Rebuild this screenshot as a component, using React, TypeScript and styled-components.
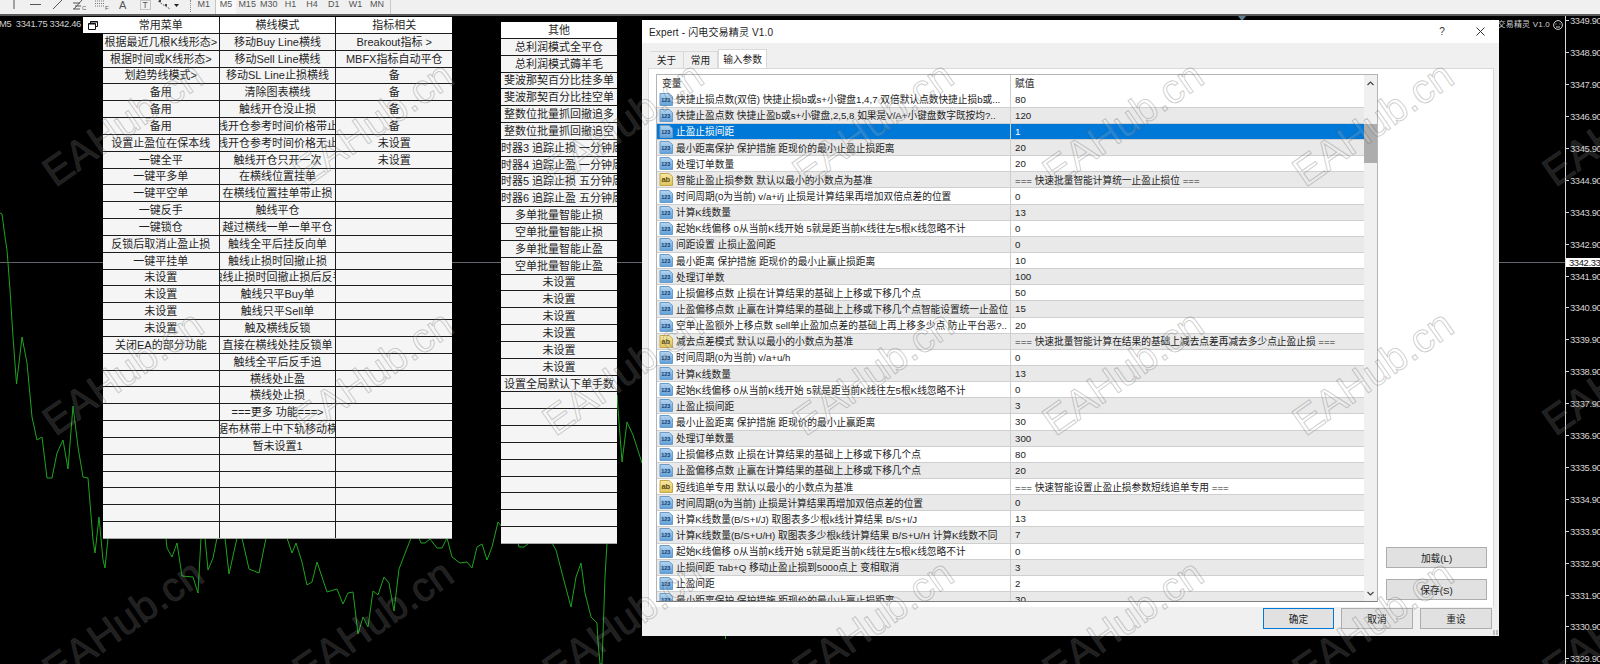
import React from "react";
import styled, { createGlobalStyle } from "styled-components";

const CJK = `"Liberation Sans", "Noto Sans CJK SC", sans-serif`;

const Global = createGlobalStyle`
  html, body { margin: 0; padding: 0; background: #000; }
  body { width: 1600px; height: 664px; overflow: hidden; font-family: ${CJK}; }
  * { box-sizing: border-box; }
`;

const Page = styled.div`
  position: relative;
  width: 1600px;
  height: 664px;
  overflow: hidden;
  display: flex;
  flex-direction: column;
  background: #000;
`;

/* ---------- toolbar ---------- */
const Toolbar = styled.div`
  height: 16px;
  flex: none;
  display: flex;
  align-items: flex-start;
  padding-left: 3px;
  background: #f0f0f0;
  border-bottom: 2px solid #5a5a5a;
  overflow: hidden;
`;
const Tool = styled.div`
  width: 22px;
  height: 11px;
  display: flex;
  justify-content: center;
  svg { display: block; }
`;
const Grip = styled.div`
  width: 1px;
  height: 12px;
  margin-left: 11px;
  margin-right: 2px;
  border-left: 1px dotted #8a8a8a;
`;
const Frame = styled.div<{ $on?: boolean }>`
  width: 21.67px;
  height: 14px;
  text-align: center;
  font-size: 9px;
  line-height: 9px;
  color: #555;
  background: ${(p) => (p.$on ? "#f9f9f9" : "transparent")};
  border-left: ${(p) => (p.$on ? "1px solid #c4c4c4" : "0")};
`;
const EndRule = styled.div`
  width: 1px;
  height: 14px;
  margin-left: 2px;
  background: #c9c9c9;
`;

/* ---------- chart ---------- */
const ChartArea = styled.div`
  flex: 1;
  min-height: 0;
  display: flex;
`;
const Plot = styled.div`
  position: relative;
  flex: 1;
  overflow: hidden;
  background: #000;
`;
const PlotLines = styled.svg`
  position: absolute;
  left: 0;
  top: 0;
  width: 1565px;
  height: 648px;
`;
const Axis = styled.div`
  position: relative;
  width: 35px;
  flex: none;
  border-left: 1px solid #d8d8d8;
  display: flex;
  flex-direction: column;
  background: #000;
`;
const AxisList = styled.div`
  margin-top: -11.2px;
  display: flex;
  flex-direction: column;
`;
const AxisLabel = styled.div`
  height: 31.92px;
  display: flex;
  align-items: center;
  color: #d4d4d4;
  font-size: 9.4px;
  letter-spacing: -0.35px;
  white-space: nowrap;
  &::before {
    content: "";
    width: 3px;
    height: 1px;
    margin-right: 1px;
    background: #d8d8d8;
    flex: none;
  }
`;
const PriceTag = styled.div`
  position: absolute;
  left: 0;
  top: 242px;
  width: 34px;
  height: 9px;
  background: #fff;
  color: #111;
  font-size: 9.4px;
  line-height: 9px;
  letter-spacing: -0.35px;
  padding-left: 3px;
`;
const Quote = styled.div`
  position: absolute;
  left: -1px;
  top: 2px;
  width: 84px;
  overflow: hidden;
  white-space: pre;
  color: #cfcfcf;
  font-size: 9.4px;
  line-height: 11px;
  letter-spacing: -0.35px;
`;
const Restore = styled.div`
  position: absolute;
  left: 83px;
  top: 1px;
  width: 20px;
  height: 16px;
  background: #fff;
  display: flex;
  align-items: center;
  justify-content: center;
`;
const EaName = styled.div`
  position: absolute;
  right: 0;
  top: 3px;
  display: flex;
  align-items: center;
  gap: 3px;
  padding-right: 2px;
  color: #d4d4d4;
  font-size: 8px;
  letter-spacing: 0.2px;
  line-height: 11px;
  white-space: nowrap;
`;
const Shift = styled.div`
  position: absolute;
  left: 1238px;
  top: 0;
  width: 0;
  height: 0;
  border-left: 4px solid transparent;
  border-right: 4px solid transparent;
  border-top: 5px solid #5f7b90;
`;

/* ---------- floating button tables ---------- */
const Panel = styled.div<{ $x: number; $y: number; $w: number; $h: number; $cols: number }>`
  position: absolute;
  left: ${(p) => p.$x}px;
  top: ${(p) => p.$y}px;
  width: ${(p) => p.$w}px;
  height: ${(p) => p.$h}px;
  display: grid;
  grid-auto-flow: column;
  grid-template-rows: repeat(31, 1fr);
  grid-template-columns: repeat(${(p) => p.$cols}, 1fr);
  gap: 1px;
  background: #1c1c1c;
  border-bottom: 1px solid #a8a8a8;
`;
const Cell = styled.div<{ $head?: boolean; $nudge?: boolean }>`
  min-width: 0;
  overflow: hidden;
  display: flex;
  align-items: center;
  justify-content: center;
  white-space: nowrap;
  padding-left: ${(p) => (p.$nudge ? 6 : 0)}px;
  background: ${(p) => (p.$head ? "#fff" : "#f5f5f5")};
  color: #1f1f1f;
  font-size: 11px;
  line-height: 14px;
`;

/* ---------- dialog ---------- */
const Dialog = styled.div`
  position: absolute;
  left: 642px;
  top: 4px;
  width: 857px;
  height: 616px;
  display: flex;
  flex-direction: column;
  background: #f0f0f0;
  font-size: 9.7px;
  color: #1c1c1c;
`;
const TitleBar = styled.div`
  height: 23px;
  flex: none;
  display: flex;
  align-items: center;
  background: #fff;
  padding-left: 7px;
  font-size: 10px;
  letter-spacing: 0.15px;
`;
const TitleText = styled.div`
  flex: 1;
`;
const TitleButton = styled.div`
  width: 38px;
  display: flex;
  justify-content: center;
  color: #333;
`;
const TabStrip = styled.div`
  height: 25px;
  flex: none;
  display: flex;
  align-items: flex-end;
  padding-left: 8px;
`;
const Tab = styled.div<{ $on?: boolean }>`
  height: ${(p) => (p.$on ? 19 : 17)}px;
  width: ${(p) => (p.$on ? 49 : 34)}px;
  display: flex;
  align-items: center;
  justify-content: center;
  background: ${(p) => (p.$on ? "#fff" : "#f0f0f0")};
  border: 1px solid #d9d9d9;
  border-bottom: 0;
  border-left-width: ${(p) => (p.$on ? 1 : 0)}px;
`;
const TabBody = styled.div`
  flex: 1;
  min-height: 0;
  display: flex;
  gap: 8px;
  margin: 0 5px 0 6px;
  padding: 5px 6px 5px 7px;
  background: #fff;
  border: 1px solid #d9d9d9;
  border-bottom: 0;
`;
const ParamGrid = styled.div`
  flex: 1;
  min-width: 0;
  display: flex;
  border: 1px solid #b4b4b4;
  border-bottom-color: #7f7f7f;
  background: #fff;
`;
const ParamList = styled.div`
  flex: 1;
  min-width: 0;
  overflow: hidden;
`;
const ParamRow = styled.div<{ $tone: "plain" | "alt" | "sel" | "head" }>`
  height: ${(p) => (p.$tone === "head" ? 16.6 : 16.15)}px;
  display: flex;
  align-items: center;
  white-space: nowrap;
  color: ${(p) => (p.$tone === "sel" ? "#fff" : "#222")};
  background: ${(p) =>
    p.$tone === "sel" ? "#0078d7" : p.$tone === "alt" ? "#e9e9e9" : "#fff"};
  border-bottom: ${(p) => (p.$tone === "head" ? "0" : "1px solid #cfcfcf")};
`;
const NameCol = styled.div`
  width: 353px;
  flex: none;
  display: flex;
  align-items: center;
  gap: 3px;
  padding-left: 2px;
  overflow: hidden;
`;
const HeadName = styled(NameCol)`
  padding-left: 5px;
`;
const ValueCol = styled.div`
  flex: 1;
  height: 100%;
  display: flex;
  align-items: center;
  padding-left: 4px;
  border-left: 1px solid #cfcfcf;
  overflow: hidden;
`;
const ScrollBar = styled.div`
  width: 13px;
  flex: none;
  display: flex;
  flex-direction: column;
  background: #f0f0f0;
`;
const ScrollEnd = styled.div`
  height: 16px;
  flex: none;
  display: flex;
  align-items: center;
  justify-content: center;
`;
const ScrollTrack = styled.div`
  flex: 1;
  padding-top: 33px;
`;
const ScrollThumb = styled.div`
  height: 39px;
  background: #adadad;
`;
const SideColumn = styled.div`
  width: 101px;
  flex: none;
  display: flex;
  flex-direction: column;
  justify-content: flex-end;
  gap: 11px;
  padding-bottom: 2px;
`;
const Button = styled.div<{ $primary?: boolean; $w?: number }>`
  height: 21px;
  width: ${(p) => (p.$w ? `${p.$w}px` : "100%")};
  display: flex;
  align-items: center;
  justify-content: center;
  background: #e1e1e1;
  border: ${(p) => (p.$primary ? "1.5px solid #0078d7" : "1px solid #adadad")};
`;
const Footer = styled.div`
  height: 29px;
  flex: none;
  display: flex;
  justify-content: flex-end;
  gap: 7px;
  padding: 1px 7px 0 0;
`;
const SizeGrip = styled.div`
  position: absolute;
  right: 1px;
  bottom: 1px;
  width: 5px;
  height: 5px;
  background: repeating-linear-gradient(90deg, #bdbdbd 0 2px, transparent 2px 3px);
`;

/* ---------- watermark ---------- */
const Mark = styled.div<{ $x: number; $y: number }>`
  position: absolute;
  left: ${(p) => p.$x}px;
  top: ${(p) => p.$y}px;
  transform: translate(-50%, -50%) rotate(-35deg);
  font-family: "Liberation Sans", sans-serif;
  font-size: 41px;
  line-height: 41px;
  white-space: nowrap;
  color: rgba(255, 255, 255, 0.12);
  -webkit-text-stroke: 1px rgba(85, 85, 85, 0.3);
  pointer-events: none;
`;

/* ---------- data ---------- */
const blank = (a: string[], n: number) => [...a, ...Array(Math.max(0, n - a.length)).fill("")];
const col1 = blank(["常用菜单","根据最近几根K线形态>","根据时间或K线形态>","划趋势线模式>","备用","备用","备用","设置止盈位在保本线","一键全平","一键平多单","一键平空单","一键反手","一键锁仓","反锁后取消止盈止损","一键平挂单","未设置","未设置","未设置","未设置","关闭EA的部分功能"], 31);
const col2 = blank(["横线模式","移动Buy Line横线","移动Sell Line横线","移动SL Line止损横线","清除图表横线","触线开仓没止损","触线开仓参考时间价格带止损","触线开仓参考时间价格无止损","触线开仓只开一次","在横线位置挂单","在横线位置挂单带止损","触线平仓","越过横线一单一单平仓","触线全平后挂反向单","触线止损时回撤止损","触线止损时回撤止损后反手","触线只平Buy单","触线只平Sell单","触及横线反锁","直接在横线处挂反锁单","触线全平后反手追","横线处止盈","横线处止损","===更多 功能===>","根据布林带上中下轨移动横线","暂未设置1"], 31);
const col3 = blank(["指标相关","Breakout指标 >","MBFX指标自动平仓","备","备","备","备","未设置","未设置"], 31);
const col4 = blank(["其他","总利润模式全平仓","总利润模式薅羊毛","斐波那契百分比挂多单","斐波那契百分比挂空单","整数位批量抓回撤追多","整数位批量抓回撤追空","定时器3 追踪止损 一分钟周期","定时器4 追踪止盈 一分钟周期","定时器5 追踪止损 五分钟周期","定时器6 追踪止盈 五分钟周期","多单批量智能止损","空单批量智能止损","多单批量智能止盈","空单批量智能止盈","未设置","未设置","未设置","未设置","未设置","未设置","设置全局默认下单手数"], 31);

type Param = [string, string, boolean?];
const params: Param[] = [
  ["快捷止损点数(双倍) 快捷止损b或s+小键盘1,4,7 双倍默认点数快捷止损b或...", "80"],
  ["快捷止盈点数  快捷止盈b或s+小键盘,2,5,8 如果是V/A+小键盘数字既按均?..", "120"],
  ["止盈止损间距", "1"],
  ["最小距离保护 保护措施 距现价的最小止盈止损距离", "20"],
  ["处理订单数量", "20"],
  ["智能止盈止损参数  默认以最小的小数点为基准", "=== 快速批量智能计算统一止盈止损位 ===", true],
  ["时间周期(0为当前)  v/a+i/j 止损是计算结果再增加双倍点差的位置", "0"],
  ["计算K线数量", "13"],
  ["起始K线偏移 0从当前K线开始 5就是距当前K线往左5根K线忽略不计", "0"],
  ["间距设置 止损止盈间距", "0"],
  ["最小距离  保护措施 距现价的最小止赢止损距离", "10"],
  ["处理订单数", "100"],
  ["止损偏移点数 止损在计算结果的基础上上移或下移几个点", "50"],
  ["止盈偏移点数 止赢在计算结果的基础上上移或下移几个点智能设置统一止盈位", "15"],
  ["空单止盈额外上移点数 sell单止盈加点差的基础上再上移多少点 防止平台恶?..", "20"],
  ["减去点差模式  默认以最小的小数点为基准", "=== 快速批量智能计算在结果的基础上减去点差再减去多少点止盈止损 ===", true],
  ["时间周期(0为当前)  v/a+u/h", "0"],
  ["计算K线数量", "13"],
  ["起始K线偏移 0从当前K线开始 5就是距当前K线往左5根K线忽略不计", "0"],
  ["止盈止损间距", "3"],
  ["最小止盈距离 保护措施 距现价的最小止赢距离", "30"],
  ["处理订单数量", "300"],
  ["止损偏移点数 止损在计算结果的基础上上移或下移几个点", "80"],
  ["止盈偏移点数 止赢在计算结果的基础上上移或下移几个点", "20"],
  ["短线追单专用 默认以最小的小数点为基准", "=== 快速智能设置止盈止损参数短线追单专用 ===", true],
  ["时间周期(0为当前)  止损是计算结果再增加双倍点差的位置", "0"],
  ["计算K线数量(B/S+I/J) 取图表多少根k线计算结果 B/S+I/J", "13"],
  ["计算K线数量(B/S+U/H) 取图表多少根k线计算结果 B/S+U/H 计算K线数不同", "7"],
  ["起始K线偏移 0从当前K线开始 5就是距当前K线往左5根K线忽略不计", "0"],
  ["止损间距 Tab+Q 移动止盈止损到5000点上 变相取消", "3"],
  ["止盈间距", "2"],
  ["最小距离保护 保护措施 距现价的最小止赢止损距离", "30"],
];

const prices = Array.from({ length: 21 }, (_, i) => (3349.9 - i).toFixed(2));
const frames = ["M1", "M5", "M15", "M30", "H1", "H4", "D1", "W1", "MN"];
const marks: [number, number][] = [];
for (const y of [124, 373, 622]) for (let k = 0; k < 7; k++) marks.push([123 + 250 * k, y]);

const line1 =
  "0,213 2,214 5,237 7,250 8,263 10,290 13,337 16.5,384 22,337 27,363 32,417 37,440 42,437 47,478 52,478 57,453 63,440 68,469 73,406 78,447 83,477 88,478 93,540 95,553 99,517 103,560 105,568 108,538 166,538 167,548 172,557 177,543 182,576 193,577 198,593 201,538 205,538 208,570 213,558 217,538 225,538 229,574 237,538 242,538 249,569 259,573 266,538 287,538 292,553 296,543 302,562 307,585 312,582 317,562 327,592 337,589 343,604 348,593 353,592 358,634 363,617 368,627 373,591 378,595 384,577 389,583 394,611 399,569 411,538 419,538 421,543 425,543 430,539 437,548 442,548 447,538 452,557 460,563 467,562 472,568 477,547 482,544 487,560 492,547 498,522 502,527 518,543 519,547 524,547 529,543 552,543 556,550 563,577 571,607 576,577 581,563 585,593 591,617 597,623 598,642 600,664 602,664 605,577 607,543 617,395 622,462 627,422 633,435 642,463";

/* ---------- small drawings ---------- */
const ParamIcon = ({ text }: { text: boolean }) => (
  <svg width="14" height="13" viewBox="0 0 14 13" style={{ flex: "none" }}>
    <defs>
      <linearGradient id="pb" x1="0" y1="0" x2="0" y2="1">
        <stop offset="0" stopColor="#b7d6f0" />
        <stop offset="1" stopColor="#5f9fd8" />
      </linearGradient>
      <linearGradient id="py" x1="0" y1="0" x2="0" y2="1">
        <stop offset="0" stopColor="#f6e9a4" />
        <stop offset="1" stopColor="#e0c35a" />
      </linearGradient>
    </defs>
    <path
      d="M1 .5h9l3.5 3v9H1z"
      fill={`url(#${text ? "py" : "pb"})`}
      stroke={text ? "#c2a94c" : "#6a9cc8"}
    />
    <text
      x="6.8"
      y={text ? 9 : 8.8}
      textAnchor="middle"
      fontSize={text ? 7.5 : 5.5}
      fontWeight="700"
      fontFamily="Liberation Sans, sans-serif"
      fill={text ? "#5b4a10" : "#123a6b"}
    >
      {text ? "ab" : "123"}
    </text>
  </svg>
);

const stroke = { stroke: "#555", fill: "none", strokeWidth: 1 };
const toolIcons = [
  <svg width="14" height="10" key="v"><path d="M7 0v9" {...stroke} /></svg>,
  <svg width="14" height="10" key="h"><path d="M1 4.5h11" {...stroke} /></svg>,
  <svg width="14" height="10" key="d"><path d="M2 9l9-9" {...stroke} /></svg>,
  <svg width="16" height="11" key="f"><path d="M2 9l8-9M1 3h7M3 6h6M1 9h7" {...stroke} /><text x="10" y="10" fontSize="6" fill="#555">C</text></svg>,
  <svg width="16" height="11" key="g"><path d="M1 1h10M1 3.500h10M1 6h10" stroke="#777" strokeDasharray="1 1" fill="none" /><text x="11" y="10" fontSize="6" fill="#555">F</text></svg>,
  <svg width="12" height="10" key="a"><text x="1" y="9" fontSize="11" fontFamily="Liberation Sans, sans-serif" fill="#555">A</text></svg>,
  <svg width="12" height="11" key="t"><rect x=".5" y=".5" width="10" height="9" fill="#f0f0f0" stroke="#c4c4c4" /><text x="2.500" y="8" fontSize="8.500" fontFamily="Liberation Sans, sans-serif" fill="#555">T</text></svg>,
  <svg width="22" height="10" key="m"><path d="M1 1l4 3 5 3 3 2" stroke="#666" strokeDasharray="2 1" fill="none" /><path d="M2 0h2v2H2zM8 4h2v2H8z" fill="#444" /><path d="M17 4h5l-2.500 3z" fill="#222" /></svg>,
];

export default function App() {
  return (
    <Page>
      <Global />
      <Toolbar>
        {toolIcons.map((icon, i) => (
          <Tool key={i}>{icon}</Tool>
        ))}
        <Grip />
        {frames.map((f) => (
          <Frame key={f} $on={f === "M5"}>{f}</Frame>
        ))}
        <EndRule />
      </Toolbar>

      <ChartArea>
        <Plot>
          <PlotLines viewBox="0 16 1565 648">
            <path d="M0 262.500H1565" stroke="#62666c" strokeWidth="1" fill="none" />
            <polyline points={line1} fill="none" stroke="#1ea51e" strokeWidth="1" />
            <path d="M725.500 634v5" stroke="#1ea51e" fill="none" />
          </PlotLines>
          <Quote>M5  3341.75 3342.46 3341.40 3342.33</Quote>
          <Restore>
            <svg width="10" height="9" viewBox="0 0 10 9">
              <path d="M2.500 2.500V.5h7v5h-2M.5 2.500h7v6h-7z" fill="none" stroke="#111" />
              <path d="M.5 3h7M2.500 1h7" stroke="#111" />
            </svg>
          </Restore>
          <EaName>
            闪电交易精灵 V1.0
            <svg width="10" height="10" viewBox="0 0 10 10">
              <circle cx="5" cy="5" r="4.400" fill="none" stroke="#d4d4d4" />
              <path d="M3 3.500v1M7 3.500v1M3 7h4" stroke="#d4d4d4" fill="none" />
            </svg>
          </EaName>
          <Shift />

          <Panel $x={103} $y={1} $w={349} $h={522} $cols={3}>
            {[col1, col2, col3].flatMap((c, ci) =>
              c.map((t, i) => (
                <Cell key={`${ci}-${i}`} $head={i === 0}><span>{t}</span></Cell>
              ))
            )}
          </Panel>
          <Panel $x={501} $y={6} $w={116} $h={522} $cols={1}>
            {col4.map((t, i) => (
              <Cell key={i} $head={i === 0} $nudge={t.startsWith("定时器")}><span>{t}</span></Cell>
            ))}
          </Panel>

          <Dialog>
            <TitleBar>
              <TitleText>Expert - 闪电交易精灵 V1.0</TitleText>
              <TitleButton>?</TitleButton>
              <TitleButton>
                <svg width="9" height="9" viewBox="0 0 9 9">
                  <path d="M.5.5l8 8M8.500.5l-8 8" stroke="#333" fill="none" />
                </svg>
              </TitleButton>
            </TitleBar>
            <TabStrip>
              <Tab>关于</Tab>
              <Tab>常用</Tab>
              <Tab $on>输入参数</Tab>
            </TabStrip>
            <TabBody>
              <ParamGrid>
                <ParamList>
                  <ParamRow $tone="head">
                    <HeadName>变量</HeadName>
                    <ValueCol>赋值</ValueCol>
                  </ParamRow>
                  {params.map(([name, value, text], i) => (
                    <ParamRow key={i} $tone={i === 2 ? "sel" : i % 2 ? "alt" : "plain"}>
                      <NameCol>
                        <ParamIcon text={!!text} />
                        <span>{name}</span>
                      </NameCol>
                      <ValueCol>{value}</ValueCol>
                    </ParamRow>
                  ))}
                </ParamList>
                <ScrollBar>
                  <ScrollEnd>
                    <svg width="7" height="5" viewBox="0 0 7 5"><path d="M.5 4l3-3 3 3" stroke="#444" strokeWidth="1.200" fill="none" /></svg>
                  </ScrollEnd>
                  <ScrollTrack><ScrollThumb /></ScrollTrack>
                  <ScrollEnd>
                    <svg width="7" height="5" viewBox="0 0 7 5"><path d="M.5 1l3 3 3-3" stroke="#444" strokeWidth="1.200" fill="none" /></svg>
                  </ScrollEnd>
                </ScrollBar>
              </ParamGrid>
              <SideColumn>
                <Button>加载(L)</Button>
                <Button>保存(S)</Button>
              </SideColumn>
            </TabBody>
            <Footer>
              <Button $primary $w={71}>确定</Button>
              <Button $w={72}>取消</Button>
              <Button $w={72}>重设</Button>
            </Footer>
            <SizeGrip />
          </Dialog>
        </Plot>

        <Axis>
          <AxisList>
            {prices.map((p) => (
              <AxisLabel key={p}>{p}</AxisLabel>
            ))}
          </AxisList>
          <PriceTag>3342.33</PriceTag>
        </Axis>
      </ChartArea>

      {marks.map(([x, y]) => (
        <Mark key={`${x}-${y}`} $x={x} $y={y}>EAHub.cn</Mark>
      ))}
    </Page>
  );
}
